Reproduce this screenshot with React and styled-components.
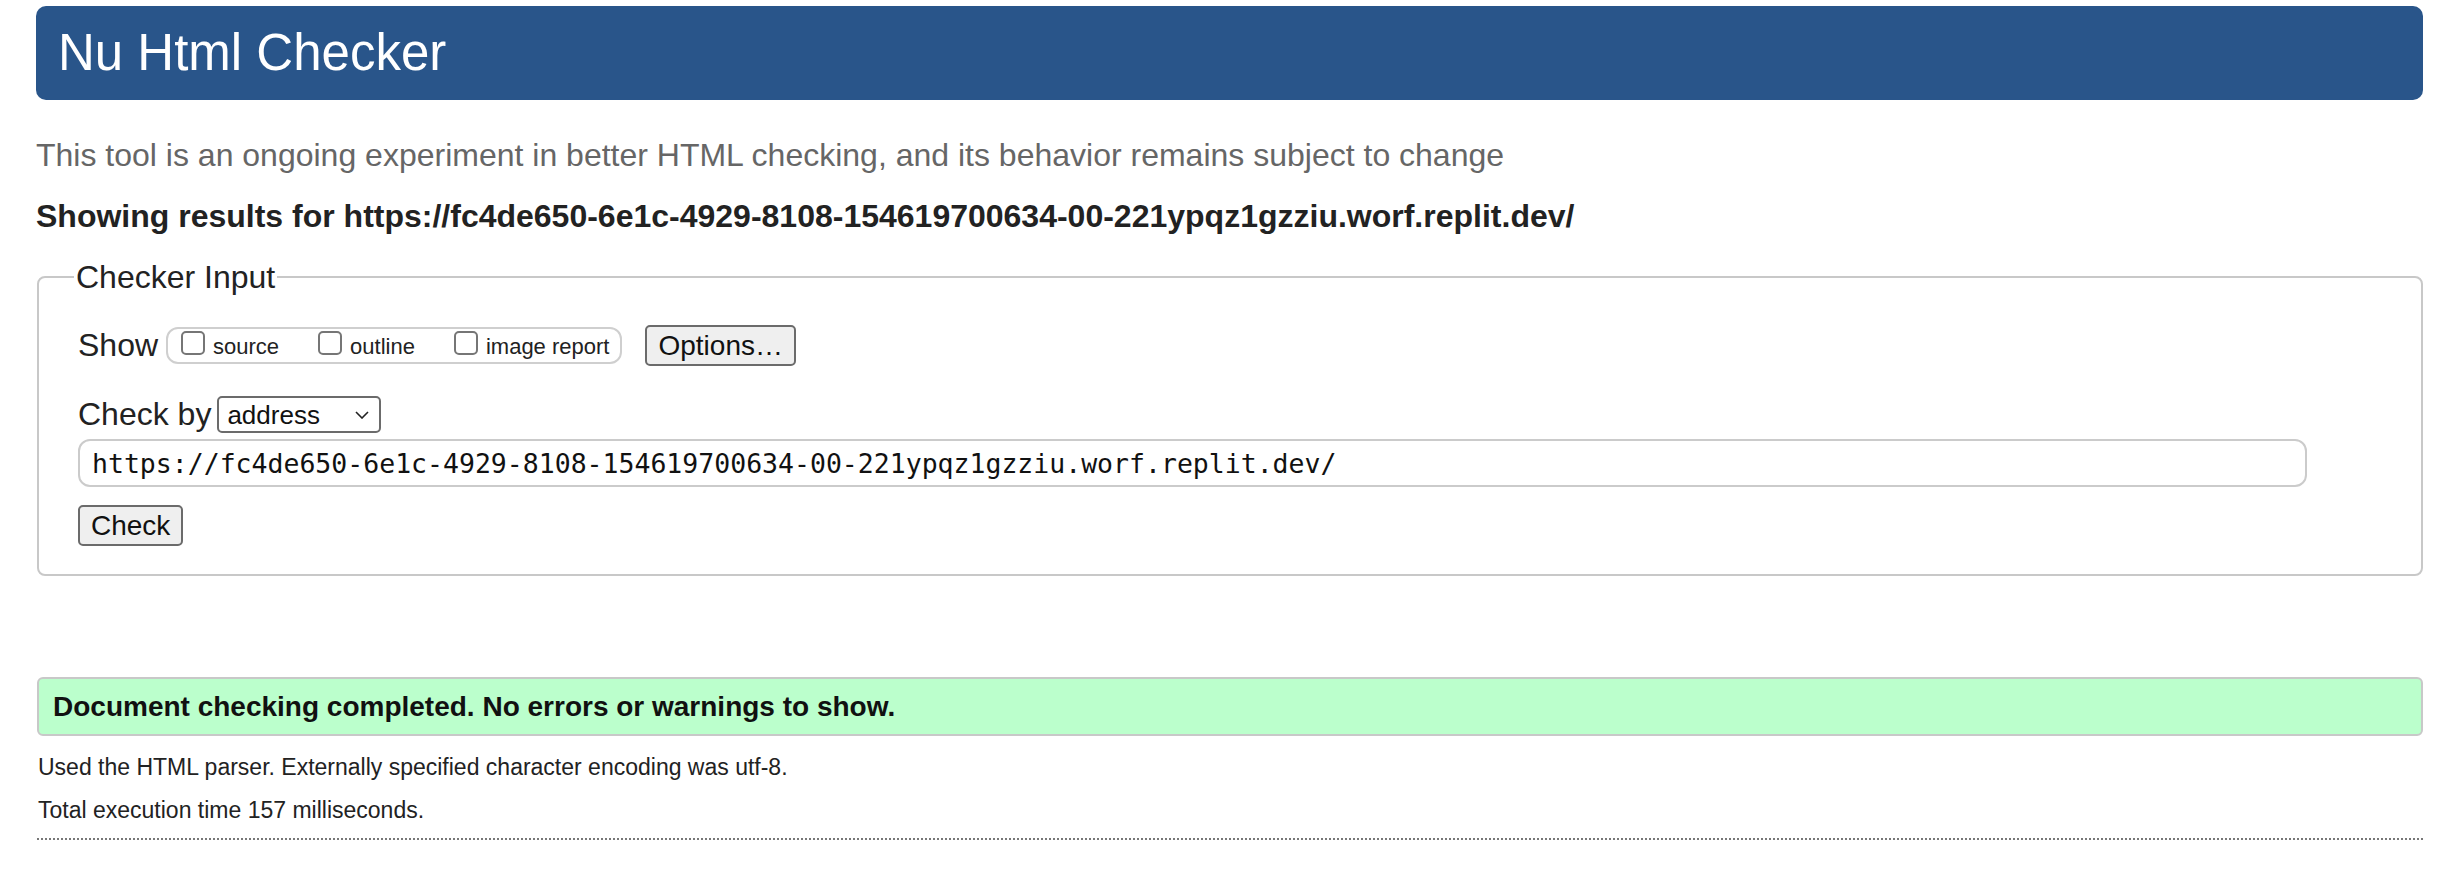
import { createGlobalStyle } from "styled-components";
import styled from "styled-components";

const url =
  "https://fc4de650-6e1c-4929-8108-154619700634-00-221ypqz1gzziu.worf.replit.dev/";

export default function App() {
  return (
    <>
      <GlobalStyle />
      <Page>
        <Header>Nu Html Checker</Header>
        <Intro>
          This tool is an ongoing experiment in better HTML checking, and its
          behavior remains subject to change
        </Intro>
        <ResultsFor>Showing results for {url}</ResultsFor>

        <Fieldset>
          <Legend>Checker Input</Legend>
          <Row>
            <Label>Show</Label>
            <OptionGroup>
              <Option>
                <Box type="checkbox" />
                source
              </Option>
              <Option>
                <Box type="checkbox" />
                outline
              </Option>
              <Option>
                <Box type="checkbox" />
                image report
              </Option>
            </OptionGroup>
            <Button $pad={11}>Options…</Button>
          </Row>
          <Row $top={30}>
            <Label>Check by</Label>
            <SelectWrap>
              <Select defaultValue="address">
                <option value="address">address</option>
                <option value="file">file upload</option>
                <option value="text">text input</option>
              </Select>
              <Chevron viewBox="0 0 14 8">
                <path d="M1 1l6 6 6-6" />
              </Chevron>
            </SelectWrap>
          </Row>
          <UrlInput defaultValue={url} />
          <Row $top={18}>
            <Button $pad={11}>Check</Button>
          </Row>
        </Fieldset>

        <Success>Document checking completed. No errors or warnings to show.</Success>
        <Note>
          Used the HTML parser. Externally specified character encoding was
          utf-8.
        </Note>
        <Note $gap={18}>Total execution time 157 milliseconds.</Note>
        <Rule />
      </Page>
    </>
  );
}

const GlobalStyle = createGlobalStyle`
  body {
    margin: 0;
    background: #fff;
    font-family: "Liberation Sans", Arial, Helvetica, sans-serif;
    color: #222;
  }
`;

const Page = styled.div`
  padding: 6px 41px 0 36px;
`;

const Header = styled.h1`
  margin: 0;
  height: 94px;
  padding-left: 22px;
  border-radius: 10px;
  background: #29558a;
  color: #fff;
  font-size: 51px;
  font-weight: normal;
  line-height: 94px;
`;

const Intro = styled.p`
  margin: 39px 0 0;
  color: #666;
  font-size: 32px;
  line-height: 32px;
`;

const ResultsFor = styled.p`
  margin: 29px 0 0;
  color: #222;
  font-size: 32px;
  font-weight: bold;
  line-height: 32px;
`;

const Fieldset = styled.fieldset`
  margin: 29px 0 0 1px;
  padding: 32px 0 28px 39px;
  border: 2px solid #c8c8c8;
  border-radius: 8px;
`;

const Legend = styled.legend`
  margin-left: -4px;
  padding: 0 2px;
  font-size: 32px;
  line-height: 32px;
  color: #222;
`;

const Row = styled.div`
  display: flex;
  align-items: center;
  margin-top: ${(p) => p.$top || 0}px;
`;

const Label = styled.span`
  font-size: 32px;
  color: #222;
  margin-right: 8px;
`;

const OptionGroup = styled.div`
  display: flex;
  align-items: center;
  height: 33px;
  padding: 0 11px 0 13px;
  border: 2px solid #cfcfcf;
  border-radius: 12px;
  margin-right: 23px;
`;

const Option = styled.label`
  display: flex;
  align-items: flex-end;
  gap: 8px;
  font-size: 22px;
  color: #222;
  margin-right: 39px;
  &:last-child {
    margin-right: 0;
  }
`;

const Box = styled.input`
  appearance: none;
  margin: 0 0 5px;
  width: 24px;
  height: 24px;
  border: 2px solid #767676;
  border-radius: 5px;
  background: #fff;
`;

const Button = styled.button`
  height: 41px;
  padding: 0 ${(p) => p.$pad || 10}px;
  border: 2px solid #6b6b6b;
  border-radius: 5px;
  background: #efefef;
  font-family: inherit;
  font-size: 28px;
  color: #111;
`;

const SelectWrap = styled.div`
  position: relative;
  display: flex;
  margin-left: -2px;
`;

const Select = styled.select`
  appearance: none;
  width: 164px;
  height: 37px;
  padding: 0 0 0 8px;
  border: 2px solid #6b6b6b;
  border-radius: 5px;
  background: #fff;
  font-family: inherit;
  font-size: 26px;
  color: #111;
`;

const Chevron = styled.svg`
  position: absolute;
  right: 12px;
  top: 15px;
  width: 14px;
  height: 8px;
  fill: none;
  stroke: #222;
  stroke-width: 1.6;
  pointer-events: none;
`;

const UrlInput = styled.input`
  display: block;
  box-sizing: border-box;
  width: 2229px;
  height: 48px;
  margin-top: 6px;
  padding: 0 12px;
  border: 2px solid #cbcbcb;
  border-radius: 12px;
  font-family: "DejaVu Sans Mono", "Liberation Mono", monospace;
  font-size: 26.5px;
  color: #111;
  outline: none;
`;

const Success = styled.div`
  margin-top: 101px;
  margin-left: 1px;
  height: 55px;
  padding-left: 14px;
  border: 2px solid #c8c8c8;
  border-radius: 6px;
  background: #bfc;
  font-size: 28px;
  font-weight: bold;
  line-height: 55px;
  color: #111;
`;

const Note = styled.p`
  margin: ${(p) => p.$gap || 19}px 0 0 2px;
  font-size: 23px;
  line-height: 25px;
  color: #222;
`;

const Rule = styled.div`
  margin: 15px 0 0 1px;
  border-top: 2px dotted #777;
`;
